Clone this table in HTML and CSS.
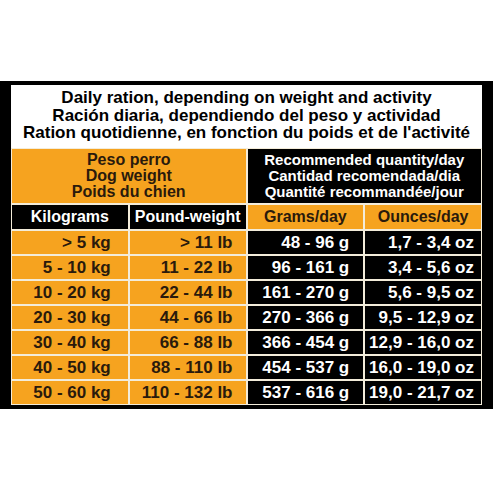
FILE: index.html
```html
<!DOCTYPE html>
<html lang="en">
<head>
    <meta charset="UTF-8">
    <link rel="stylesheet" href="styles.css">
</head>
<body>
    <div class="frame">
        <div class="card">
            <div class="title">
                Daily ration, depending on weight and activity<br>
                Ración diaria, dependiendo del peso y actividad<br>
                Ration quotidienne, en fonction du poids et de l'activité
            </div>

            <div class="grid">
                <div class="group orange">Peso perro<br>Dog weight<br>Poids du chien</div>
                <div class="group black">Recommended quantity/day<br>Cantidad recomendada/dia<br>Quantité recommandée/jour</div>

                <div class="head black">Kilograms</div>
                <div class="head black">Pound-weight</div>
                <div class="head orange">Grams/day</div>
                <div class="head orange">Ounces/day</div>

                <div class="cell orange c1">&gt; 5 kg</div>
                <div class="cell orange c2">&gt; 11 lb</div>
                <div class="cell black c3">48 - 96 g</div>
                <div class="cell black c4">1,7 - 3,4 oz</div>

                <div class="cell orange c1">5 - 10 kg</div>
                <div class="cell orange c2">11 - 22 lb</div>
                <div class="cell black c3">96 - 161 g</div>
                <div class="cell black c4">3,4 - 5,6 oz</div>

                <div class="cell orange c1">10 - 20 kg</div>
                <div class="cell orange c2">22 - 44 lb</div>
                <div class="cell black c3">161 - 270 g</div>
                <div class="cell black c4">5,6 - 9,5 oz</div>

                <div class="cell orange c1">20 - 30 kg</div>
                <div class="cell orange c2">44 - 66 lb</div>
                <div class="cell black c3">270 - 366 g</div>
                <div class="cell black c4">9,5 - 12,9 oz</div>

                <div class="cell orange c1">30 - 40 kg</div>
                <div class="cell orange c2">66 - 88 lb</div>
                <div class="cell black c3">366 - 454 g</div>
                <div class="cell black c4">12,9 - 16,0 oz</div>

                <div class="cell orange c1">40 - 50 kg</div>
                <div class="cell orange c2">88 - 110 lb</div>
                <div class="cell black c3">454 - 537 g</div>
                <div class="cell black c4">16,0 - 19,0 oz</div>

                <div class="cell orange c1">50 - 60 kg</div>
                <div class="cell orange c2">110 - 132 lb</div>
                <div class="cell black c3">537 - 616 g</div>
                <div class="cell black c4">19,0 - 21,7 oz</div>
            </div>
        </div>
    </div>
</body>
</html>
```

FILE: styles.css
```css
* {
    margin: 0;
    padding: 0;
    box-sizing: border-box;
}

body {
    font-family: "Liberation Sans", Arial, sans-serif;
    font-weight: bold;
    background: white;
    width: 493px;
    height: 493px;
    overflow: hidden;
}

.frame {
    margin-top: 81px;
    background: #000;
    padding: 4px 11px 4px 11px;
}

.card {
    background: white;
}

.title {
    height: 63px;
    padding-top: 4px;
    font-size: 17px;
    line-height: 17.5px;
    text-align: center;
    color: #000;
}

.grid {
    display: grid;
    grid-template-columns: repeat(4, 1fr);
    grid-template-rows: 54px 24px repeat(7, 23px);
    gap: 2px;
    padding: 1px;
    background: #f3ecda;
}

.orange {
    background: #f6a31f;
    color: #2a1a0c;
}

.black {
    background: #000;
    color: #fff;
}

.group {
    grid-column: span 2;
    display: flex;
    align-items: center;
    justify-content: center;
    text-align: center;
    line-height: 16px;
}

.group.orange {
    font-size: 16px;
}

.group.black {
    font-size: 15px;
}

.head {
    font-size: 16px;
    line-height: 24px;
    text-align: center;
}

.cell {
    font-size: 17px;
    line-height: 23px;
    text-align: right;
}

.c1 { padding-right: 17px; }
.c2 { padding-right: 13px; }
.c3 { padding-right: 14px; }
.c4 { padding-right: 7px; }
```
